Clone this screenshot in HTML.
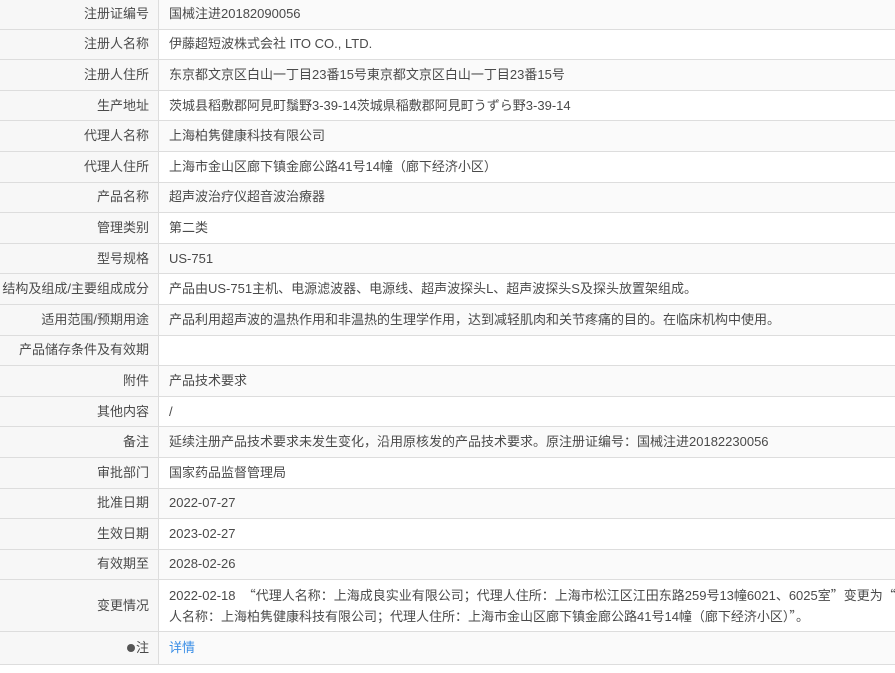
<!DOCTYPE html>
<html><head><meta charset="utf-8"><style>
html,body{margin:0;overflow:hidden}
body{background:#fff;font-family:"Liberation Sans","Noto Sans CJK SC",sans-serif;font-size:13px;color:#4a4a4a;width:895px;height:673px;position:relative}
table{border-collapse:collapse;position:absolute;top:-1px;left:0;width:895px;table-layout:fixed}
td{border-bottom:1px solid #ddd;height:29.6px;padding:0;line-height:20px;white-space:nowrap;overflow:hidden}
td.l{width:149px;text-align:right;padding-right:9px;border-right:1px solid #ddd;background:#f7f7f7}
td.v{padding-left:10px}
tr:nth-child(odd) td.v{background:#fafafa}
tr.big td{height:51px}
tr.big td.v div{width:756px;white-space:normal}
.q{font-family:"Noto Sans CJK SC",sans-serif}
a{color:#3a8ee6;text-decoration:none}
</style></head><body>
<table>
<tr><td class="l">注册证编号</td><td class="v">国械注进20182090056</td></tr>
<tr><td class="l">注册人名称</td><td class="v">伊藤超短波株式会社 ITO CO., LTD.</td></tr>
<tr><td class="l">注册人住所</td><td class="v">东京都文京区白山一丁目23番15号東京都文京区白山一丁目23番15号</td></tr>
<tr><td class="l">生产地址</td><td class="v">茨城县稻敷郡阿見町鬚野3-39-14茨城県稲敷郡阿見町うずら野3-39-14</td></tr>
<tr><td class="l">代理人名称</td><td class="v">上海柏隽健康科技有限公司</td></tr>
<tr><td class="l">代理人住所</td><td class="v">上海市金山区廊下镇金廊公路41号14幢（廊下经济小区）</td></tr>
<tr><td class="l">产品名称</td><td class="v">超声波治疗仪超音波治療器</td></tr>
<tr><td class="l">管理类别</td><td class="v">第二类</td></tr>
<tr><td class="l">型号规格</td><td class="v">US-751</td></tr>
<tr><td class="l">结构及组成/主要组成成分</td><td class="v">产品由US-751主机、电源滤波器、电源线、超声波探头L、超声波探头S及探头放置架组成。</td></tr>
<tr><td class="l">适用范围/预期用途</td><td class="v">产品利用超声波的温热作用和非温热的生理学作用，达到减轻肌肉和关节疼痛的目的。在临床机构中使用。</td></tr>
<tr><td class="l">产品储存条件及有效期</td><td class="v"></td></tr>
<tr><td class="l">附件</td><td class="v">产品技术要求</td></tr>
<tr><td class="l">其他内容</td><td class="v">/</td></tr>
<tr><td class="l">备注</td><td class="v">延续注册产品技术要求未发生变化，沿用原核发的产品技术要求。原注册证编号：国械注进20182230056</td></tr>
<tr><td class="l">审批部门</td><td class="v">国家药品监督管理局</td></tr>
<tr><td class="l">批准日期</td><td class="v">2022-07-27</td></tr>
<tr><td class="l">生效日期</td><td class="v">2023-02-27</td></tr>
<tr><td class="l">有效期至</td><td class="v">2028-02-26</td></tr>
<tr class="big"><td class="l">变更情况</td><td class="v"><div>2022-02-18 &nbsp;<span class="q">“</span>代理人名称：上海成良实业有限公司；代理人住所：上海市松江区江田东路259号13幢6021、6025室<span class="q">”</span>变更为<span class="q">“</span>代理人名称：上海柏隽健康科技有限公司；代理人住所：上海市金山区廊下镇金廊公路41号14幢（廊下经济小区）<span class="q">”</span>。</div></td></tr>
<tr><td class="l" style="height:32px"><span style="display:inline-block;width:8px;height:8px;border-radius:50%;background:#555;margin-right:1px"></span>注</td><td class="v"><a>详情</a></td></tr>
</table>
</body></html>
